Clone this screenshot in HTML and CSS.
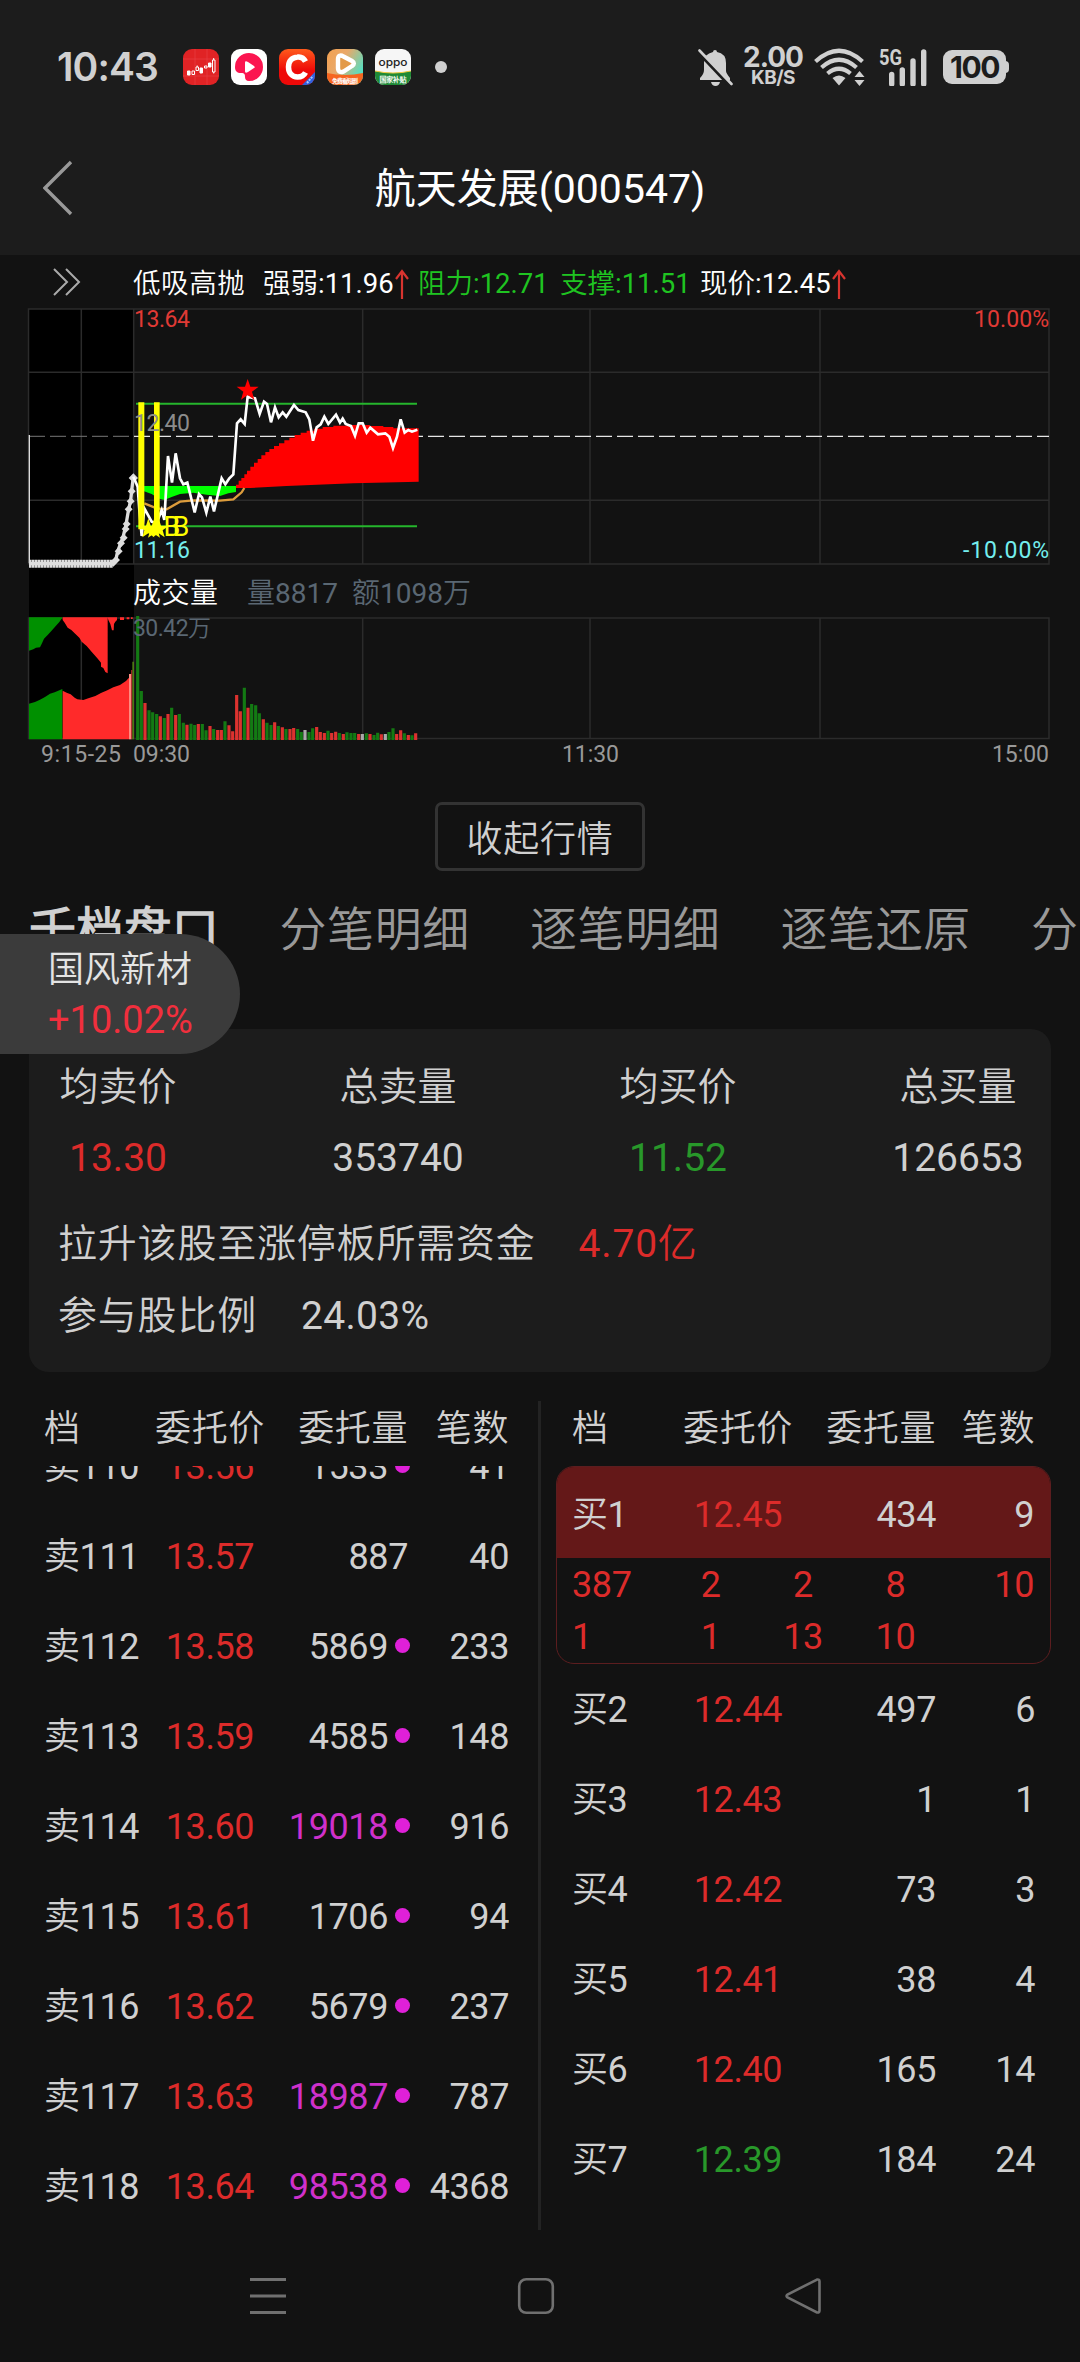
FILE: index.html
```html
<!DOCTYPE html>
<html lang="zh-CN">
<head>
<meta charset="utf-8">
<title>航天发展(000547)</title>
<link rel="stylesheet" href="styles.css">
</head>
<body>
<div class="screen">
  <header class="top">
    <div class="status">
      <span class="clock">10:43</span>
      <div class="apps">
        <svg class="app" viewBox="0 0 36 36"><rect width="36" height="36" rx="9" fill="#e02325"/><path d="M12 0V36M24 0V36M0 10H36M0 27H36" stroke="#e94547" stroke-width=".6"/><path d="M4.500 22h2.500v4h-2.500zM17 19h2.500v5h-2.500zM25.500 14h2.500v4h-2.500z" fill="#fff" stroke="#fff"/><path d="M9 22h2.500v3.500h-2.500zM13 18h2.500v3.500h-2.500zM21.500 17h2.500v2h-2.500zM29.500 11h2.500v12h-2.500zM30.700 9v2M30.700 23v1.500M14.200 16.500v1.500" fill="none" stroke="#fff"/></svg>
        <svg class="app" viewBox="0 0 36 36"><rect width="36" height="36" rx="9" fill="#fff"/><path d="M4 18a14 14 0 1 1 14 14c-3 0-4-2-4-4s0-4-4-4-6-2-6-6z" fill="#fb1550"/><path d="M14 14c0-2 1-2 3-1l6 4c1 1 1 2 0 2l-6 4c-2 1-3 1-3-1z" fill="#fff"/></svg>
        <svg class="app" viewBox="0 0 36 36"><defs><linearGradient id="ga" x2="0" y2="1"><stop stop-color="#ff5a1c"/><stop offset=".6" stop-color="#ee0908"/></linearGradient><clipPath id="ca"><rect width="36" height="36" rx="9"/></clipPath></defs><g clip-path="url(#ca)"><rect width="36" height="36" fill="url(#ga)"/><path d="M26.500 12.500C25 9.500 22 7.500 18.500 8C13 8.500 9.500 12 9.500 18s3.500 10 9 10c4 0 6.500-1.500 8-4.500" fill="none" stroke="#fff" stroke-width="5.500"/><path d="M36 23V36H23z" fill="#2f62df"/><path d="M28 34l6-7" stroke="#aac6ff" stroke-width="2" stroke-dasharray="2 1"/></g></svg>
        <svg class="app" viewBox="0 0 36 36"><defs><linearGradient id="gb" y2=".6"><stop stop-color="#f3a04f"/><stop offset=".45" stop-color="#e9a96a"/><stop offset="1" stop-color="#4fe0c4"/></linearGradient><clipPath id="cb"><rect width="36" height="36" rx="9"/></clipPath></defs><g clip-path="url(#cb)"><rect width="36" height="36" fill="url(#gb)"/><path d="M0 24Q18 28 36 24V36H0z" fill="#f6651f"/><path d="M11 10c0-3.500 2.500-4.500 5.500-2.500l8.500 4.500c2.500 1.500 2.500 3.500 0 5l-8.500 5.500c-3 1.500-5.500 0-5.500-3.500z" fill="#e39a4a" stroke="#fff" stroke-width="4.400"/><text class="app-text" x="18" y="34" font-size="6" textLength="26">免费看短剧</text></g></svg>
        <svg class="app" viewBox="0 0 36 36"><defs><clipPath id="cc"><rect width="36" height="36" rx="9"/></clipPath></defs><g clip-path="url(#cc)"><rect width="36" height="36" fill="#f6f6f6"/><path d="M0 22Q18 26 36 22V36H0z" fill="#1f8a36"/><path d="M0 22Q18 26 36 22" fill="none" stroke="#f0c93e"/><text class="app-text oppo" x="18" y="17" font-size="11" textLength="29" lengthAdjust="spacingAndGlyphs">oppo</text><text class="app-text" x="18" y="33" font-size="7" textLength="27">国家补贴</text></g></svg>
      </div>
      <i class="more"></i>
      <div class="sys">
        <svg class="bell" viewBox="0 0 36 37"><path d="M17 1q2 0 2 2q9 1.500 9 11v8q0 2 4 7v2H2v-2q4-4 4-8v-8q0-8 9-10q0-2 2-2zM13 33h9q-1 4-4.500 4t-4.500-4z" fill="#d0d0d0"/><path d="M1-1L36 36" stroke="#1c1c1c" stroke-width="4" transform="translate(-2.500 2)"/><path d="M1.500 1.500L33.500 35" stroke="#d0d0d0" stroke-width="2.600" stroke-linecap="round"/></svg>
        <div class="speed"><b>2.00</b><span>KB/S</span></div>
        <svg class="wifi" viewBox="0 0 52 38"><g fill="none" stroke="#d0d0d0" stroke-width="4.200"><path d="M1.500 13.500Q25 -8 48.500 13.500"/><path d="M7.500 19.500Q25 4 42.500 19.500"/><path d="M13.500 25.500Q25 16 36.500 25.500"/></g><path d="M18.500 30Q25 25 31.500 30L25 37.500zM45.500 23l5 6h-10zM45.500 38l5-6h-10z" fill="#d0d0d0"/></svg>
        <svg class="signal" viewBox="0 0 48 37"><text x="0" y="16" font-size="22" textLength="23" lengthAdjust="spacingAndGlyphs">5G</text><path d="M12.700 25.500V35M23.300 21V35M34 12V35M44.700 3V35" stroke="#d0d0d0" stroke-width="5.400" stroke-linecap="round"/></svg>
        <div class="battery">100</div>
      </div>
    </div>
    <div class="titlebar">
      <svg class="back" viewBox="0 0 30 56"><path d="M28 2L2 28L28 54" fill="none" stroke="#999" stroke-width="3.400"/></svg>
      <h1>航天发展(000547)</h1>
    </div>
  </header>

  <section class="indicators">
    <svg class="expand" viewBox="0 0 28 28"><path d="M1 1L14 14L1 27M13 1L26 14L13 27" fill="none" stroke="#aaa" stroke-width="2"/></svg>
    <span class="name">低吸高抛</span>
    <span>强弱:11.96<svg class="up" viewBox="0 0 14 30"><path d="M7 30V2M1 10L7 2L13 10" fill="none" stroke="#d8342f" stroke-width="2.200"/></svg></span>
    <span class="lime">阻力:12.71</span>
    <span class="lime">支撑:11.51</span>
    <span>现价:12.45<svg class="up" viewBox="0 0 14 30"><path d="M7 30V2M1 10L7 2L13 10" fill="none" stroke="#d8342f" stroke-width="2.200"/></svg></span>
  </section>

  <svg class="chart" viewBox="0 302 1080 468">
    <rect x="29" y="309" width="105" height="430" fill="#000"/>
    <g fill="none" stroke="#2b2b2b" stroke-width="1.500">
      <path d="M28.500 309H1049V564H28.500zM28.500 372.300H1049M28.500 500.300H1049M81.300 309V564M133.700 309V564M362.700 309V564M590 309V564M820 309V564"/>
      <path d="M28.500 618H1049V738.500H28.500zM133.700 618V738M362.700 618V738M590 618V738M820 618V738M81.300 640V702"/>
    </g>
    <path d="M29 436.300H134" stroke="#777" stroke-width="1" stroke-dasharray="16 5"/>
    <path d="M134 436.300H1049" stroke="#e6e6e6" stroke-width="1.300" stroke-dasharray="16 5"/>
    <g class="label">
      <text x="134" y="327" fill="#e03a35" textLength="56">13.64</text>
      <text x="134" y="558" fill="#74eeee" textLength="56">11.16</text>
      <text x="974" y="327" fill="#e03a35" textLength="75">10.00%</text>
      <text x="963" y="558" fill="#74eeee" textLength="86">-10.00%</text>
      <text x="41" y="762" fill="#999" textLength="80">9:15-25</text>
      <text x="133" y="762" fill="#999" textLength="57">09:30</text>
      <text x="562" y="762" fill="#999" textLength="57">11:30</text>
      <text x="992" y="762" fill="#999" textLength="57">15:00</text>
    </g>
    <g class="label big">
      <text x="133" y="602.500" fill="#fff" textLength="85">成交量</text>
      <text x="247" y="602.500" fill="#5a6773" textLength="91">量8817</text>
      <text x="352" y="602.500" fill="#5a6773" textLength="119">额1098万</text>
    </g>

    <!-- price panel, drawn on a 3x grid -->
    <g transform="translate(20 290) scale(.33333)" fill="none">
      <path d="M368 588H648V606L625 610L600 618L560 614L520 608L480 612L455 621L433 630L418 626L395 612L368 602z" fill="#0f0"/>
      <path d="M648 594V584H656V572H664V564H673V553H681V542H691V530H702V518H713V507H724V496H736V486H748V477H762V468H777V460H793V451H808V443H824V435H842V428H860V422H882V416H908V411H940V407H990V405H1050V408H1090V411H1120V415H1196V575L1000 580L800 588L690 594z" fill="#f00"/>
      <path d="M348 341H1191M348 709H1191" stroke="#25b52c" stroke-width="6"/>
      <path d="M373 640L410 655L440 658L480 635L520 631L600 632L640 628L665 607L673 594" stroke="#dc9c3c" stroke-width="7"/>
      <path d="M28 435V820" stroke="#ddd" stroke-width="4"/>
      <path d="M27 821H275L287 812L293 784L303 758L309 742L318 704L326 657L332 632L335 602L340 560" stroke="#ddd" stroke-width="10"/>
      <path d="M27 821H278" stroke="#ddd" stroke-width="24" stroke-dasharray="8 1"/>
      <path d="M280 806l12 12l-12 12l-12-12zM288 798l12 12l-12 12l-12-12zM296 772l12 12l-12 12l-12-12zM303 748l12 12l-12 12l-12-12zM311 731l12 12l-12 12l-12-12zM317 705l12 12l-12 12l-12-12zM320 690l12 12l-12 12l-12-12zM326 646l12 12l-12 12l-12-12zM332 622l12 12l-12 12l-12-12zM335 592l12 12l-12 12l-12-12zM340 550l14 14l-14 14l-14-14z" fill="#ddd"/>
      <path d="M340 560L353 590L358 660L365 738L373 655L395 695L410 700L425 660L433 690L444 498L456 578L467 490L480 565L490 583L502 578L524 667L537 612L546 622L559 668L571 620L582 664L605 565L616 583L628 565L640 553L651 400L662 388L674 402L683 320L705 325L719 372L732 335L741 342L753 397L765 352L776 382L788 367L799 380L822 345L835 360L857 367L868 388L879 452L890 412L902 403L913 380L925 402L948 374L960 398L968 386L977 402L993 408L1005 437L1016 400L1028 400L1040 428L1051 413L1074 433L1096 430L1108 440L1119 474L1131 440L1142 388L1154 428L1165 420L1176 425L1192 419" stroke="#fff" stroke-width="8"/>
      <path d="M355 337H373V718H355zM402 337H419V718H402z" fill="#ff0"/>
      <path d="M683 267L691 290H716L696 305L703 329L683 315L663 329L670 305L650 290H675z" fill="#f00"/>
      <path d="M385 685L392 707H415L397 721L403 742L385 730L367 742L373 721L355 707H378zM402 688L409 708H432L414 722L420 743L402 731L384 743L390 722L372 708H395zM416 685L423 707H446L428 721L434 742L416 730L398 742L404 721L386 707H409z" fill="#ff0"/>
    </g>
    <text class="mark" x="163.500" y="536">B</text>
    <text class="mark" x="172.500" y="536">B</text>
    <text class="label" x="134" y="431" fill="#8c8c8c" textLength="56">12.40</text>

    <!-- volume panel, drawn on a 3x grid -->
    <g transform="translate(20 570) scale(.33333)" fill="none">
      <path d="M27 142H128L118 156L104 172L94 183L83 195L72 206L66 220L60 232L48 233L40 238L27 242zM27 401L45 396L60 389L75 381L90 371L104 367L127 357V508H27z" fill="#009000"/>
      <path d="M128 142H263V310L256 306L250 294L243 290V278L232 265L216 247L200 228L185 215L178 203L164 190L154 180L143 173L134 158L128 150zM263 142H291V150L286 155L282 162L281 181H276L271 162L265 150zM300 142h12v8h-12zM320 142h8v6h-8zM333 142h5v5h-5zM128 362L140 368L152 373L164 383L172 388L190 390L205 385L226 378L243 369L262 361L280 352L300 345L318 333L327 323V508H128z" fill="#ff2a2a"/>
      <path d="M327 312h7V508h-7z" fill="#ff8a80"/><path d="M334 300h3V508h-3z" fill="#d33"/><path d="M337 275h5V508h-5z" fill="#4d7a14"/>
      <path stroke="#137a13" stroke-width="9.500" d="M353 138V510M364 363V510M387 421V510M398 427V510M410 432V510M433 444V510M455 413V510M478 432V510M490 458V510M513 461V510M524 465V510M547 462V510M558 481V510M581 477V510M615 454V510M673 353V510M695 402V510M707 406V510M718 430V510M741 458V510M753 465V510M775 468V510M798 477V510M833 477V510M844 486V510M867 486V510M878 475V510M924 482V510M958 489V510M981 487V510M993 489V510M1004 489V510M1039 490V510M1062 495V510M1073 488V510M1107 486V510M1119 475V510M1153 490V510M1176 496V510"/>
      <path stroke="#dc322f" stroke-width="9.500" d="M375 399V510M421 439V510M444 432V510M467 435V510M501 464V510M535 462V510M570 468V510M593 480V510M604 480V510M627 466V510M638 484V510M650 375V510M661 424V510M684 413V510M730 448V510M764 457V510M787 472V510M810 477V510M821 474V510M890 471V510M901 486V510M913 489V510M935 489V510M947 485V510M970 492V510M1016 492V510M1050 492V510M1084 493V510M1130 492V510M1142 481V510M1165 495V510M1187 490V510"/>
      <path stroke="#aaa" stroke-width="9.500" d="M855 480V510M1027 492V510M1096 492V510"/>
    </g>
    <text class="label" x="133" y="636" fill="#5a6773" textLength="78">30.42万</text>
  </svg>

  <button class="collapse">收起行情</button>

  <nav class="tabs">
    <span class="on">千档盘口</span><span>分笔明细</span><span>逐笔明细</span><span>逐笔还原</span><span>分价表</span>
    <div class="float"><span>国风新材</span><b>+10.02%</b></div>
  </nav>

  <section class="card">
    <div class="stats">
      <div><span>均卖价</span><span class="red">13.30</span></div>
      <div><span>总卖量</span><span>353740</span></div>
      <div><span>均买价</span><span class="green">11.52</span></div>
      <div><span>总买量</span><span>126653</span></div>
    </div>
    <p class="need"><span>拉升该股至涨停板所需资金</span><span class="red">4.70亿</span></p>
    <p class="ratio"><span>参与股比例</span><span>24.03%</span></p>
  </section>

  <section class="book">
    <div class="side sell">
      <div class="row head"><span>档</span><span>委托价</span><span>委托量</span><span>笔数</span></div>
      <div class="list">
        <div class="row"><span>卖110</span><span>13.56</span><span class="dot">1533</span><span>41</span></div>
        <div class="row"><span>卖111</span><span>13.57</span><span>887</span><span>40</span></div>
        <div class="row"><span>卖112</span><span>13.58</span><span class="dot">5869</span><span>233</span></div>
        <div class="row"><span>卖113</span><span>13.59</span><span class="dot">4585</span><span>148</span></div>
        <div class="row"><span>卖114</span><span>13.60</span><span class="dot large">19018</span><span>916</span></div>
        <div class="row"><span>卖115</span><span>13.61</span><span class="dot">1706</span><span>94</span></div>
        <div class="row"><span>卖116</span><span>13.62</span><span class="dot">5679</span><span>237</span></div>
        <div class="row"><span>卖117</span><span>13.63</span><span class="dot large">18987</span><span>787</span></div>
        <div class="row"><span>卖118</span><span>13.64</span><span class="dot large">98538</span><span>4368</span></div>
      </div>
    </div>
    <div class="divider"></div>
    <div class="side buy">
      <div class="row head"><span>档</span><span>委托价</span><span>委托量</span><span>笔数</span></div>
      <div class="best">
        <div class="row"><span>买1</span><span>12.45</span><span>434</span><span>9</span></div>
        <div class="orders">
          <span>387</span><span>2</span><span>2</span><span>8</span><span>10</span>
          <span>1</span><span>1</span><span>13</span><span>10</span>
        </div>
      </div>
      <div class="row"><span>买2</span><span>12.44</span><span>497</span><span>6</span></div>
      <div class="row"><span>买3</span><span>12.43</span><span>1</span><span>1</span></div>
      <div class="row"><span>买4</span><span>12.42</span><span>73</span><span>3</span></div>
      <div class="row"><span>买5</span><span>12.41</span><span>38</span><span>4</span></div>
      <div class="row"><span>买6</span><span>12.40</span><span>165</span><span>14</span></div>
      <div class="row"><span>买7</span><span class="green">12.39</span><span>184</span><span>24</span></div>
    </div>
  </section>

  <footer class="sysnav">
    <svg viewBox="0 0 40 40"><path d="M2 3.500H38M2 20H38M2 36.500H38" stroke="#707070" stroke-width="3"/></svg>
    <svg viewBox="0 0 40 40"><rect x="3.200" y="3.200" width="33.600" height="33.600" rx="7" fill="none" stroke="#707070" stroke-width="2.600"/></svg>
    <svg viewBox="0 0 40 40"><path d="M34 3.600L4.500 18.500Q2.500 20 4.500 21.500L34 36.400Q36.500 37 36.500 34.500V5.500Q36.500 3 34 3.600z" fill="none" stroke="#707070" stroke-width="2.600"/></svg>
  </footer>
</div>
</body>
</html>
```
FILE: styles.css
```css
* { box-sizing: border-box; }

body {
  margin: 0;
  background: #121212;
  color: #d0d0d0;
  font-family: Roboto, "Noto Sans CJK SC DemiLight", "Noto Sans CJK SC Light", "Noto Sans CJK SC", sans-serif;
}

.screen {
  position: relative;
  display: flex;
  flex-direction: column;
  width: 1080px;
  height: 2362px;
  overflow: hidden;
}

svg { display: block; flex: none; }
.red { color: #dc2b2a; }
.green { color: #28982a; }
.lime { color: #1fc421; }

/* status bar and title */
.top { height: 255px; background: #1c1c1c; }

.status {
  display: flex;
  align-items: center;
  height: 134px;
  padding: 0 74px 0 57px;
}

.clock {
  width: 126px;
  font: 600 39px/40px Inter, sans-serif;
  letter-spacing: -0.9px;
  white-space: nowrap;
}

.apps { display: flex; gap: 12px; }
.app { width: 36px; height: 36px; }
.app-text { fill: #fff; text-anchor: middle; font-weight: 700; }
.app-text.oppo { fill: #222; font-family: Inter, sans-serif; font-weight: 500; }

.more {
  width: 12px;
  height: 12px;
  margin-left: 24px;
  border-radius: 50%;
  background: #d0d0d0;
}

.sys { display: flex; align-items: center; margin-left: auto; }
.bell { width: 36px; height: 37px; margin-right: 8px; }
.speed {
  display: flex;
  flex-direction: column;
  align-items: center;
  width: 62px;
  margin-right: 10px;
  font-family: Inter, sans-serif;
}
.speed b { font-size: 28px; line-height: 21px; font-weight: 700; letter-spacing: -1px; }
.speed span { font-size: 19px; line-height: 20px; font-weight: 700; letter-spacing: -0.5px; }
.wifi { width: 52px; height: 38px; margin-right: 13px; }
.signal { width: 48px; height: 37px; margin-right: 16px; }
.signal text { fill: #d0d0d0; font-weight: 700; }
.battery {
  position: relative;
  width: 63px;
  height: 34px;
  border-radius: 9px;
  background: #d0d0d0;
  color: #1c1c1c;
  font: 700 30px/35px Inter, sans-serif;
  letter-spacing: -1.5px;
  text-align: center;
}
.battery::after {
  content: "";
  position: absolute;
  left: 62px;
  top: 11px;
  width: 4px;
  height: 12px;
  border-radius: 0 4px 4px 0;
  background: #d0d0d0;
}

.titlebar {
  display: grid;
  grid-template-columns: 30px 1fr 30px;
  align-items: center;
  padding: 0 43px;
  height: 108px;
}
.back { width: 30px; height: 56px; }
h1 {
  margin: 0;
  padding-top: 2px;
  color: #fff;
  font: 400 41px/60px Roboto, "Noto Sans CJK SC", sans-serif;
  text-align: center;
}

/* indicator line */
.indicators {
  display: grid;
  grid-template-columns: 80px 130px 155px 142px 140px 1fr;
  align-items: center;
  height: 47px;
  padding: 10px 0 0 53px;
  color: #fff;
  font-size: 27.500px;
  line-height: 34px;
  white-space: nowrap;
}
.indicators > span { display: flex; align-items: center; }
.indicators .name { letter-spacing: 0.6px; }
.expand { width: 28px; height: 28px; margin-bottom: 3px; }
.up { width: 14px; height: 30px; margin-left: 1px; }

/* chart */
.chart { width: 1080px; height: 468px; }
.label { font-size: 23px; }
.label.big { font-size: 28px; }
.mark { fill: #ff0; font-size: 27px; }

.collapse {
  align-self: center;
  width: 210px;
  height: 69px;
  margin-top: 32px;
  padding: 0 0 2px;
  border: 3px solid #333;
  border-radius: 7px;
  background: transparent;
  color: #d0d0d0;
  font: inherit;
  font-size: 36px;
  letter-spacing: 0.7px;
}

.tabs {
  position: relative;
  display: flex;
  gap: 60.500px;
  height: 158px;
  padding: 29px 0 0 29px;
  color: #999;
  font-size: 47px;
  line-height: 60px;
  letter-spacing: 0.6px;
  white-space: nowrap;
}
.tabs > span { flex: none; width: 190px; }
.tabs .on { color: #d0d0d0; font-weight: 700; }

.float {
  position: absolute;
  left: 0;
  top: 63px;
  display: flex;
  flex-direction: column;
  width: 240px;
  height: 120px;
  padding: 11px 0 0 48px;
  border-radius: 0 60px 60px 0;
  background: #3b3b3b;
  color: #e4e4e4;
  font-size: 36px;
  line-height: 50px;
  letter-spacing: 0;
}
.float b { color: #f02f3d; font-size: 38px; font-weight: 400; }

/* summary card */
.card {
  width: 1022px;
  height: 343px;
  margin-left: 29px;
  padding: 33px 30px 0;
  border-radius: 20px;
  background: #1c1c1c;
  font-size: 39px;
  line-height: 50px;
}
.stats { display: grid; grid-template-columns: repeat(4, 280px); margin: 0 -81px; }
.stats div { display: flex; flex-direction: column; align-items: center; gap: 21px; }
.card p { display: flex; margin: 0 0 0 -1px; letter-spacing: 0.8px; }
.need { padding-top: 36px; gap: 43px; }
.ratio { padding-top: 22px; gap: 44px; }
.ratio span:last-child { letter-spacing: 0.3px; }

/* order book */
.book {
  display: flex;
  height: 829px;
  margin-top: 29px;
  font-size: 36px;
  letter-spacing: -0.4px;
}
.divider { width: 3px; background: #232323; }
.sell { width: 538px; padding: 0 29px 0 44px; }
.buy { width: 539px; padding: 0 29px 0 15px; }

.row {
  display: grid;
  grid-template-columns: 110px 112px 142px 1fr;
  align-items: center;
  height: 90px;
  padding-top: 2px;
  line-height: 50px;
}
.buy > .row { padding: 2px 16px 0; }
.row span:nth-child(2) { text-align: center; }
.row span:nth-child(n + 3) { text-align: right; }
.row:not(.head) span:nth-child(2):not(.green) { color: #dc2b2a; }
.side .row.head { height: 65px; padding-bottom: 11px; letter-spacing: 0.6px; white-space: nowrap; }

.list { height: 764px; overflow: hidden; }
.list .row:first-child { margin-top: -45px; }

.dot { display: flex; align-items: center; justify-content: flex-end; gap: 7px; }
.dot::after {
  content: "";
  width: 15px;
  height: 15px;
  margin: 0 -2px 3px 0;
  border-radius: 50%;
  background: #df20d8;
}
.large { color: #cf30cb; }

.best {
  height: 198px;
  border: 1.500px solid #5c1d1f;
  border-radius: 18px;
  overflow: hidden;
}
.best .row { padding: 4px 16px 0 15px; background: #641818; height: 91px; }
.orders {
  display: grid;
  grid-template-columns: repeat(5, 1fr);
  padding: 1px 16px 0 15px;
  color: #dc2b2a;
  line-height: 52px;
  text-align: center;
}
.orders span:nth-child(5n + 1) { text-align: left; }
.orders span:nth-child(5n) { text-align: right; }

/* system navigation */
.sysnav {
  display: flex;
  align-items: center;
  justify-content: space-between;
  height: 132px;
  padding: 0 257px 0 248px;
}
.sysnav svg { width: 40px; height: 40px; }
```
